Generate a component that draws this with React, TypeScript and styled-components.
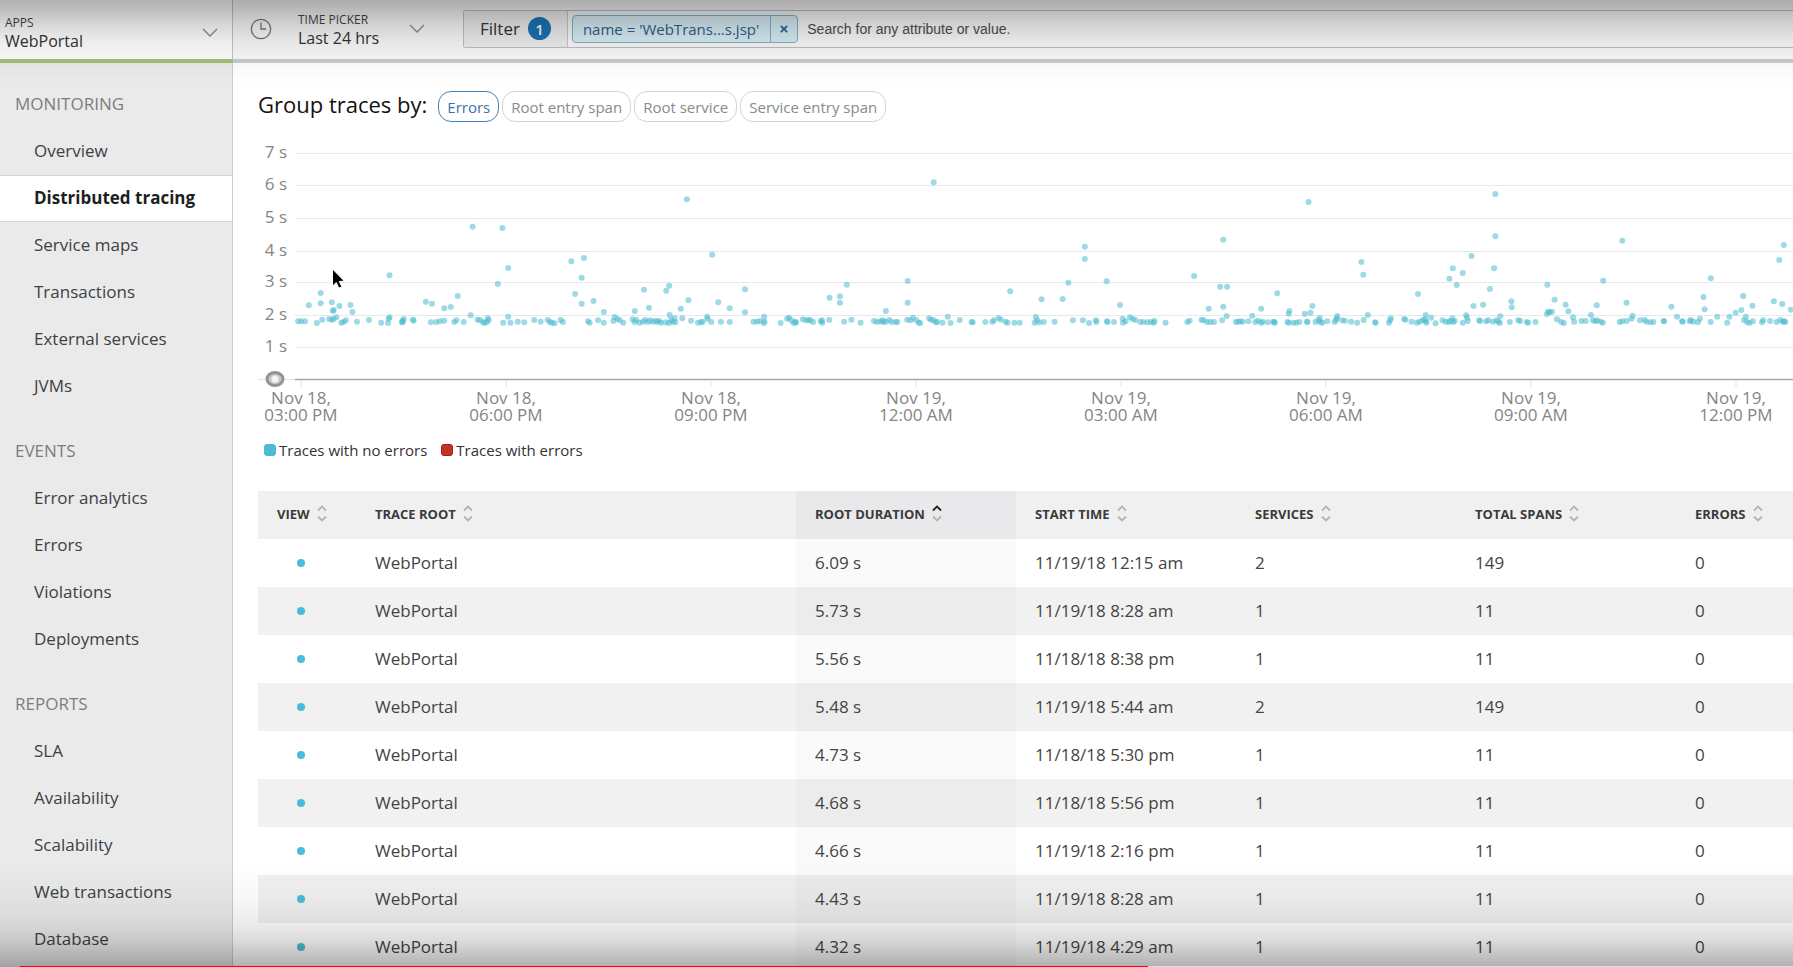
import React from "react";
import styled, { createGlobalStyle } from "styled-components";

const GlobalStyle = createGlobalStyle`
  *, *::before, *::after { box-sizing: border-box; }
  body {
    margin: 0;
    overflow: hidden;
    background: #fff;
    color: #333;
    font: 400 17px/24px "Open Sans", "Noto Sans", sans-serif;
  }
  button, input { font: inherit; color: inherit; }
  button { cursor: pointer; }
`;

/* ---------- shell ---------- */

const Shell = styled.div`
  display: grid;
  grid-template-columns: 233px minmax(0, 1fr);
  grid-template-rows: auto minmax(0, 1fr);
  height: 100vh;
  overflow: hidden;
`;

const AppSwitcher = styled.button`
  display: flex;
  align-items: center;
  justify-content: space-between;
  height: 63px;
  padding: 5px 14px 0 5px;
  border: 0;
  border-right: 1px solid #c4c4c4;
  border-bottom: 4px solid #a3c275;
  background: #fff;
  text-align: left;
`;

const TopBar = styled.header`
  display: flex;
  align-items: center;
  height: 63px;
  padding-bottom: 2px;
  border-bottom: 4px solid #cbcbcb;
  background: #f9f9f9;
`;

const TwoLine = styled.span`
  display: flex;
  flex-direction: column;
`;

const Caption = styled.span`
  font-size: 12px;
  line-height: 18px;
  color: #444;
`;

const Value = styled.span`
  font-size: 16px;
  line-height: 18px;
  color: #333;
`;

const TimePicker = styled.button`
  display: flex;
  align-items: center;
  gap: 26px;
  width: 230px;
  padding: 0 38px 0 17px;
  border: 0;
  background: none;
  text-align: left;
`;

const TimeText = styled(TwoLine)`
  flex: 1;
`;

const FilterBar = styled.div`
  display: flex;
  align-items: center;
  flex: 1;
  min-width: 0;
  height: 38px;
  border: 1px solid #c0c0c0;
  border-right: 0;
  border-radius: 3px 0 0 3px;
  background: #f9f9f9;
`;

const FilterButton = styled.button`
  display: flex;
  align-items: center;
  gap: 8px;
  height: 36px;
  margin-right: 4px;
  padding: 0 16px;
  border: 0;
  border-right: 1px solid #c8c8c8;
  background: #eee;
`;

const Count = styled.span`
  display: grid;
  place-items: center;
  width: 23px;
  height: 23px;
  border-radius: 50%;
  background: #1b74b8;
  color: #fff;
  font-size: 15px;
  font-weight: 600;
`;

const Token = styled.span`
  display: flex;
  flex: none;
  height: 28px;
  border: 1px solid #7fb2c8;
  border-radius: 4px;
  background: #d8eef5;
  color: #2b618f;
  font-size: 15px;
  line-height: 26px;
`;

const TokenText = styled.span`
  padding: 0 11px 0 10px;
  white-space: nowrap;
`;

const TokenRemove = styled.button`
  display: grid;
  place-items: center;
  width: 27px;
  padding: 0;
  border: 0;
  border-left: 1px solid #7fb2c8;
  background: none;
`;

const SearchInput = styled.input`
  flex: 1;
  min-width: 0;
  height: 36px;
  padding: 0 9px;
  border: 0;
  outline: 0;
  background: none;
  font-family: "Liberation Sans", Arial, sans-serif;
  font-size: 14px;
  &::placeholder { color: #4c4c4c; opacity: 1; }
`;

/* ---------- side navigation ---------- */

const Sidebar = styled.nav`
  display: flex;
  flex-direction: column;
  gap: 18px;
  padding-top: 18px;
  overflow: hidden;
  border-right: 1px solid #cdcdcd;
  background: #eaeaea;
`;

const NavTitle = styled.h2`
  height: 47px;
  margin: 0;
  padding-left: 15px;
  color: #7d7d7d;
  font-size: 17px;
  font-weight: 400;
  line-height: 45px;
`;

const NavList = styled.ul`
  margin: 0;
  padding: 0;
  list-style: none;
`;

const NavLink = styled.a<{ $active?: boolean }>`
  display: block;
  height: 47px;
  padding-left: 34px;
  border: solid ${(p) => (p.$active ? "#d6d6d6" : "transparent")};
  border-width: 1px 0;
  background: ${(p) => (p.$active ? "#fff" : "none")};
  color: ${(p) => (p.$active ? "#1c1f22" : "#3c4146")};
  font-weight: ${(p) => (p.$active ? 700 : 400)};
  line-height: 43px;
  text-decoration: none;
`;

/* ---------- content ---------- */

const Content = styled.main`
  min-width: 0;
  padding: 28px 0 0 25px;
  overflow: hidden;
`;

const GroupRow = styled.div`
  display: flex;
  align-items: center;
  gap: 3px;
  height: 31px;
`;

const GroupTitle = styled.h1`
  margin: 0 8px 6px 0;
  color: #111;
  font-size: 22px;
  font-weight: 400;
  line-height: 28px;
`;

const Pill = styled.button<{ $on?: boolean }>`
  height: 31px;
  padding: 0 8px;
  border: 1px solid ${(p) => (p.$on ? "#4682b8" : "#d4d4d4")};
  border-radius: 13px;
  background: #fff;
  color: ${(p) => (p.$on ? "#3873ae" : "#858c8c")};
  font-size: 15px;
  line-height: 28px;
`;

const Chart = styled.figure`
  position: relative;
  margin: 18px 0 0;
`;

const Plot = styled.svg`
  display: block;
  width: 100%;
  height: 290px;
  overflow: hidden;
`;

const AxisText = styled.text`
  fill: #858585;
  font-size: 17px;
`;

const Pointer = styled.svg`
  position: absolute;
  left: 73px;
  top: 127px;
  width: 18px;
  height: 24px;
`;

const Legend = styled.figcaption`
  display: flex;
  gap: 14px;
  padding: 10px 0 1px 6px;
  font-size: 15px;
  line-height: 20px;
`;

const LegendItem = styled.span`
  display: flex;
  align-items: center;
  gap: 3px;
`;

const Swatch = styled.span<{ $color: string; $edge: string }>`
  width: 12px;
  height: 12px;
  border: 1px solid ${(p) => p.$edge};
  border-radius: 3px;
  background: ${(p) => p.$color};
`;

/* ---------- table ---------- */

const Table = styled.table`
  width: 100%;
  margin-top: 30px;
  border-collapse: collapse;
  table-layout: fixed;
`;

const Col = styled.col<{ $width?: number }>`
  width: ${(p) => (p.$width ? `${p.$width}px` : "auto")};
`;

const HeadCell = styled.th<{ $sorted?: boolean }>`
  height: 48px;
  padding: 0 0 3px 19px;
  background: ${(p) => (p.$sorted ? "#e9e9eb" : "#f0f0f0")};
  text-align: left;
`;

const SortButton = styled.button`
  display: flex;
  align-items: center;
  gap: 7px;
  padding: 0;
  border: 0;
  background: none;
  color: #3a3a3a;
  font-size: 13px;
  font-weight: 700;
  line-height: 20px;
  white-space: nowrap;
`;

const Row = styled.tr`
  &:nth-child(even) { background: #f1f1f1; }
`;

const Cell = styled.td<{ $sorted?: boolean }>`
  height: 48px;
  padding: 0 0 1px 19px;
  background: ${(p) => (p.$sorted ? "rgba(0, 0, 0, 0.02)" : "none")};
  color: #444;
`;

const DotCell = styled(Cell)`
  padding: 0 0 0 39px;
`;

const Dot = styled.span`
  display: block;
  width: 8px;
  height: 8px;
  border-radius: 50%;
  background: #4cbcd6;
`;

/* ---------- player overlay ---------- */

const Shade = styled.div`
  position: fixed;
  inset: 0;
  pointer-events: none;
  background:
    linear-gradient(to bottom, rgba(0,0,0,.31) 0, rgba(0,0,0,.25) 10px, rgba(0,0,0,.15) 26px,
      rgba(0,0,0,.07) 42px, rgba(0,0,0,.03) 60px, rgba(0,0,0,0) 86px) top / 100% 86px no-repeat,
    linear-gradient(to top, rgba(0,0,0,.31) 0, rgba(0,0,0,.15) 25px, rgba(0,0,0,.08) 42px,
      rgba(0,0,0,.03) 68px, rgba(0,0,0,0) 105px) bottom / 100% 105px no-repeat;
`;

const Progress = styled.div`
  position: fixed;
  left: 20px;
  right: 0;
  bottom: 0;
  height: 1px;
  background: #ddd;
`;

const Played = styled.div`
  height: 1px;
  background: #f00;
`;

/* ---------- data ---------- */

const playedShare = 1128 / 1773;

const sections = [
  { title: "MONITORING", items: ["Overview", "Distributed tracing", "Service maps", "Transactions", "External services", "JVMs"] },
  { title: "EVENTS", items: ["Error analytics", "Errors", "Violations", "Deployments"] },
  { title: "REPORTS", items: ["SLA", "Availability", "Scalability", "Web transactions", "Database"] },
];

const groupings = ["Errors", "Root entry span", "Root service", "Service entry span"];

const columns: { label: string; width?: number }[] = [
  { label: "VIEW", width: 98 },
  { label: "TRACE ROOT" },
  { label: "ROOT DURATION", width: 220 },
  { label: "START TIME", width: 220 },
  { label: "SERVICES", width: 220 },
  { label: "TOTAL SPANS", width: 220 },
  { label: "ERRORS", width: 117 },
];

const traces = [
  ["6.09 s", "11/19/18 12:15 am", "2", "149"],
  ["5.73 s", "11/19/18 8:28 am", "1", "11"],
  ["5.56 s", "11/18/18 8:38 pm", "1", "11"],
  ["5.48 s", "11/19/18 5:44 am", "2", "149"],
  ["4.73 s", "11/18/18 5:30 pm", "1", "11"],
  ["4.68 s", "11/18/18 5:56 pm", "1", "11"],
  ["4.66 s", "11/19/18 2:16 pm", "1", "11"],
  ["4.43 s", "11/19/18 8:28 am", "1", "11"],
  ["4.32 s", "11/19/18 4:29 am", "1", "11"],
];

const PLOT_WIDTH = 1535;
const pct = (x: number) => `${(x / PLOT_WIDTH) * 100}%`;

const gridLines = [
  { label: "7 s", y: 13 }, { label: "6 s", y: 45 }, { label: "5 s", y: 78 }, { label: "4 s", y: 111 },
  { label: "3 s", y: 142 }, { label: "2 s", y: 175 }, { label: "1 s", y: 207 },
];

const ticks = [
  ["Nov 18,", "03:00 PM"], ["Nov 18,", "06:00 PM"], ["Nov 18,", "09:00 PM"], ["Nov 19,", "12:00 AM"],
  ["Nov 19,", "03:00 AM"], ["Nov 19,", "06:00 AM"], ["Nov 19,", "09:00 AM"], ["Nov 19,", "12:00 PM"],
];

/* Three consecutive stretches of the timeline. Inside a stretch, time runs at
   1568 units per 600 plot units and duration at 3 units per pixel. */
const stretches = [
  {
    from: -258,
    points: `1235,260 1313,264 1018,406 1328,384 1301,432 1493,364 1526,354 1520,413 1503,462 1520,491 1551,483
      838,459 807,496 838,490 867,487 887,498 916,495 921,516 872,510 870,513 1196,468 1113,485 1129,491 1161,505
      1178,501 779,544 787,544 797,544 828,549 842,539 860,537 867,539 872,537 879,532 892,548 898,546 904,541
      933,545 964,540 996,548 1014,549 1018,532 1016,536 1050,546 1052,547 1055,537 1053,542 1079,539 1081,542
      1126,547 1140,546 1150,544 1161,542 1187,546 1193,541 1212,546 1230,526 1248,539 1254,540 1262,546 1266,549
      1272,546 1275,535 1277,541 1315,548 1328,530 1334,548 1353,545 1370,547 1396,540 1413,545 1431,540 1437,546
      1442,548 1449,550 1465,540 1471,546 1537,544 1541,548 1563,541`,
  },
  {
    from: 342,
    points: `227,178 872,127 293,344 1267,320 1267,357 1224,428 1324,424 804,423 115,449 181,437 173,452 379,448
      231,481 309,487 339,505 379,517 211,506 128,503 91,513 10,516 182,525 645,434 600,473 627,469 627,488 804,488
      747,513 1072,454 1154,478 1209,477 1359,495 1139,531 10,548 35,543 38,531 45,537 52,541 61,548 85,538 90,546
      95,540 103,548 112,545 118,540 125,546 131,541 138,545 145,542 150,546 155,543 160,548 172,547 180,549
      186,540 190,545 197,547 195,535 215,535 238,542 256,548 264,546 268,546 280,530 281,537 291,546 316,545
      339,546 401,545 410,545 418,543 429,530 430,545 428,549 472,549 489,536 494,533 500,541 506,549 511,545
      512,548 530,538 538,541 545,540 550,541 557,546 577,544 581,548 580,541 599,540 638,545 657,539 681,548
      716,543 724,546 733,544 739,541 740,546 747,545 756,540 762,546 773,546 777,546 803,539 812,541 818,533
      827,541 833,548 837,549 860,535 865,539 872,541 878,547 881,546 895,548 909,530 916,549 940,540 971,546
      974,547 1007,546 1025,545 1030,541 1042,534 1048,539 1060,545 1065,548 1083,548 1097,548 1136,548 1142,541
      1148,547 1160,546 1188,545 1236,541 1262,541 1278,549 1296,541 1297,546 1325,544 1326,546 1343,546 1366,536
      1367,548 1374,544 1385,532 1392,537 1399,540 1412,546 1420,546 1431,547 1440,546 1447,548 1449,543 1478,548
      1535,546 1541,542`,
  },
  {
    from: 935,
    points: `3,408 302,186 790,162 79,299 790,289 1122,302 1544,315 1532,360 440,366 445,404 728,348 679,385 705,399
      670,416 689,435 787,385 776,447 588,462 1353,415 1072,422 926,434 71,440 89,440 220,460 79,500 41,506 178,506
      312,498 307,518 292,521 252,513 250,521 733,498 758,494 832,484 833,502 945,479 974,494 981,514 938,515
      928,515 925,522 932,517 1055,496 1133,488 1250,500 1334,471 1337,508 1438,468 1462,497 1518,484 1540,492
      1562,509 1433,510 1418,518 22,540 28,541 37,546 45,546 55,546 76,541 88,528 112,546 118,545 124,544 130,545
      145,544 155,527 163,546 170,542 178,548 182,545 195,547 209,546 212,545 214,548 247,546 250,548 262,548
      270,548 278,546 298,545 299,546 320,546 328,541 331,534 333,546 338,548 351,544 370,546 374,540 377,528
      376,535 390,541 397,542 413,545 429,548 446,540 457,525 476,547 477,548 512,548 517,535 515,541 552,537
      555,539 571,545 585,548 592,545 600,541 606,538 608,525 608,544 610,548 622,533 634,550 652,541 660,545
      668,546 672,543 678,535 680,546 684,543 705,548 714,526 716,533 718,543 748,541 750,543 766,544 772,541
      784,545 793,541 798,545 803,529 802,549 828,546 850,541 855,543 872,546 876,548 895,546 951,538 962,546
      969,549 993,532 996,545 1015,543 1026,543 1040,525 1045,541 1052,544 1056,541 1066,545 1071,548 1115,546
      1122,544 1133,543 1146,536 1149,527 1168,541 1180,540 1185,545 1195,547 1203,546 1230,543 1231,544 1265,530
      1278,544 1280,545 1298,544 1301,540 1308,545 1320,546 1325,536 1353,546 1370,530 1396,548 1402,530 1440,540
      1445,530 1448,546 1454,549 1463,544 1487,547 1490,541 1508,543 1525,546 1535,540 1541,545 1545,544 1548,546`,
  },
];

const samples = stretches.flatMap(({ from, points }) =>
  points.split(/\s+/).map((pair) => {
    const [t, d] = pair.split(",").map(Number);
    return { x: from + (t * 600) / 1568, y: d / 3 };
  }),
);

/* ---------- icons ---------- */

const ChevronDown = () => (
  <svg width="16" height="9" viewBox="0 0 16 9" fill="none" stroke="#8a8a8a" strokeWidth="1.3" aria-hidden="true">
    <path d="M1 1l7 7 7-7" />
  </svg>
);

const Clock = () => (
  <svg width="22" height="22" viewBox="0 0 22 22" fill="none" stroke="#777" strokeWidth="1.3" aria-hidden="true">
    <circle cx="11" cy="11" r="9.7" />
    <path d="M11 4.5V11h5" />
  </svg>
);

const SortIcon = ({ up }: { up?: boolean }) => (
  <svg width="10" height="17" viewBox="0 0 10 17" fill="none" strokeWidth="1.8" aria-hidden="true">
    <path d="M1 5.5l4-4 4 4" stroke={up ? "#222" : "#b4b4b4"} />
    <path d="M1 11.5l4 4 4-4" stroke="#b4b4b4" />
  </svg>
);

const Cross = () => (
  <svg width="8" height="8" viewBox="0 0 8 8" stroke="#2b618f" strokeWidth="1.8" aria-hidden="true">
    <path d="M.8.8l6.4 6.4M7.2.8L.8 7.2" />
  </svg>
);

function TraceChart() {
  return (
    <Chart>
      <Plot role="img" aria-label="Trace durations over the last 24 hours">
        {gridLines.map((g) => (
          <g key={g.label}>
            <line x1={37} x2="100%" y1={g.y + 0.5} y2={g.y + 0.5} stroke="#e8e9ea" strokeWidth={1} />
            <AxisText x={29} y={g.y + 5} textAnchor="end">{g.label}</AxisText>
          </g>
        ))}
        <line x1={0} x2={37} y1={239.5} y2={239.5} stroke="#e4e4e4" />
        <line x1={37} x2="100%" y1={239.5} y2={239.5} stroke="#a6a9a9" strokeWidth={1.5} />
        {samples.map((s, i) => (
          <circle key={i} cx={pct(s.x)} cy={s.y} r={3} fill="#4cbccf" fillOpacity={0.55} />
        ))}
        {ticks.map(([day, hour], i) => {
          const x = pct(43 + i * 205);
          return (
            <g key={day + hour}>
              <line x1={x} x2={x} y1={241} y2={247} stroke="#e2e2e2" />
              <AxisText y={264} textAnchor="middle">
                <tspan x={x}>{day}</tspan>
                <tspan x={x} dy={17}>{hour}</tspan>
              </AxisText>
            </g>
          );
        })}
        <ellipse cx={17} cy={239} rx={8} ry={6.5} fill="#c9c9c9" stroke="#929292" strokeWidth={3} />
        <circle cx={17} cy={239} r={3.5} fill="#f4f4f4" />
      </Plot>
      <Pointer viewBox="0 0 18 24" aria-hidden="true">
        <path d="M1.5 2v17l3.8-3.4 2.6 5.6 3-1.4-2.6-5.3 5-.5z" fill="#000" stroke="#fff" strokeWidth="1" />
      </Pointer>
      <Legend>
        <LegendItem><Swatch $color="#4cbcd6" $edge="#4cbcd6" />Traces with no errors</LegendItem>
        <LegendItem><Swatch $color="#c33427" $edge="#a11c1c" />Traces with errors</LegendItem>
      </Legend>
    </Chart>
  );
}

function TraceTable() {
  return (
    <Table>
      <colgroup>
        {columns.map((c) => <Col key={c.label} $width={c.width} />)}
      </colgroup>
      <thead>
        <tr>
          {columns.map((c, i) => (
            <HeadCell key={c.label} scope="col" $sorted={i === 2}>
              <SortButton type="button">{c.label}<SortIcon up={i === 2} /></SortButton>
            </HeadCell>
          ))}
        </tr>
      </thead>
      <tbody>
        {traces.map(([duration, start, services, spans]) => (
          <Row key={duration}>
            <DotCell><Dot /></DotCell>
            <Cell>WebPortal</Cell>
            <Cell $sorted>{duration}</Cell>
            <Cell>{start}</Cell>
            <Cell>{services}</Cell>
            <Cell>{spans}</Cell>
            <Cell>0</Cell>
          </Row>
        ))}
      </tbody>
    </Table>
  );
}

export default function App() {
  return (
    <>
      <GlobalStyle />
      <Shell>
        <AppSwitcher type="button">
          <TwoLine>
            <Caption>APPS</Caption>
            <Value>WebPortal</Value>
          </TwoLine>
          <ChevronDown />
        </AppSwitcher>
        <TopBar>
          <TimePicker type="button">
            <Clock />
            <TimeText>
              <Caption>TIME PICKER</Caption>
              <Value>Last 24 hrs</Value>
            </TimeText>
            <ChevronDown />
          </TimePicker>
          <FilterBar>
            <FilterButton type="button">Filter<Count>1</Count></FilterButton>
            <Token>
              <TokenText>name = 'WebTrans...s.jsp'</TokenText>
              <TokenRemove type="button" aria-label="Remove filter"><Cross /></TokenRemove>
            </Token>
            <SearchInput type="text" aria-label="Search attributes" placeholder="Search for any attribute or value." />
          </FilterBar>
        </TopBar>
        <Sidebar>
          {sections.map((s) => (
            <section key={s.title}>
              <NavTitle>{s.title}</NavTitle>
              <NavList>
                {s.items.map((item) => (
                  <li key={item}>
                    <NavLink href="#" $active={item === "Distributed tracing"}>{item}</NavLink>
                  </li>
                ))}
              </NavList>
            </section>
          ))}
        </Sidebar>
        <Content>
          <GroupRow>
            <GroupTitle>Group traces by:</GroupTitle>
            {groupings.map((g, i) => (
              <Pill key={g} type="button" $on={i === 0}>{g}</Pill>
            ))}
          </GroupRow>
          <TraceChart />
          <TraceTable />
        </Content>
      </Shell>
      <Shade />
      <Progress><Played style={{ width: `${playedShare * 100}%` }} /></Progress>
    </>
  );
}
